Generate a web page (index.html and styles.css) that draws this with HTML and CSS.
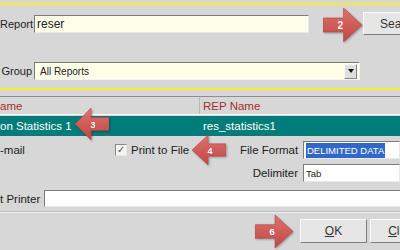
FILE: index.html
```html
<!DOCTYPE html>
<html lang="en">
<head>
  <meta charset="UTF-8" />
  <title>Report Search</title>
  <link rel="stylesheet" href="styles.css">
</head>
<body>
  <div class="dialog">
    <div class="rule"></div>

    <div class="criteria">
      <div class="row row-report">
        <span class="lbl">Report</span>
        <input type="text" class="field field-report" value="reser" />
        <button class="btn btn-search">Search</button>
      </div>
      <div class="row row-group">
        <span class="lbl">Group</span>
        <div class="select">
          <span class="select-text">All Reports</span>
          <span class="select-btn"><span class="caret"></span></span>
        </div>
      </div>
    </div>

    <div class="rule rule-low"></div>

    <div class="list">
      <div class="list-head">
        <div class="cell cell-name">ame</div>
        <div class="cell cell-rep">REP Name</div>
      </div>
      <div class="list-row selected">
        <div class="cell cell-name">on Statistics 1</div>
        <div class="cell cell-rep">res_statistics1</div>
      </div>
    </div>

    <div class="options">
      <span class="opt-lbl">-mail</span>
      <label class="check">
        <span class="box">&#10003;</span>
        <span>Print to File</span>
      </label>
      <span class="opt-lbl right">File Format</span>
      <div class="field field-small"><span class="sel-text">DELIMITED DATA</span></div>

      <span></span>
      <span></span>
      <span class="opt-lbl right">Delimiter</span>
      <div class="field field-small field-white">Tab</div>
    </div>

    <div class="printer">
      <span class="opt-lbl">t Printer</span>
      <div class="field field-white field-printer"></div>
    </div>

    <div class="separator"></div>

    <div class="footer">
      <button class="btn btn-ok"><u>O</u>K</button>
      <button class="btn btn-close"><u>C</u>lose</button>
    </div>

    <!-- callout arrows -->
    <svg class="arrow arrow-2" viewBox="0 0 38 34" preserveAspectRatio="none">
      <defs>
        <linearGradient id="red" x1="0" y1="0" x2="0" y2="1">
          <stop offset="0" stop-color="#e0716d"/>
          <stop offset="1" stop-color="#c04744"/>
        </linearGradient>
      </defs>
      <polygon points="0,10 20,10 20,0 38,17 20,34 20,24 0,24" fill="url(#red)" stroke="#b04a47" stroke-width="0.6"/>
      <text x="17" y="21" text-anchor="middle">2</text>
    </svg>
    <svg class="arrow arrow-3" viewBox="0 0 38 34" preserveAspectRatio="none">
      <polygon points="38,10 18,10 18,0 0,17 18,34 18,24 38,24" fill="url(#red)" stroke="#b04a47" stroke-width="0.6"/>
      <text x="20" y="21" text-anchor="middle">3</text>
    </svg>
    <svg class="arrow arrow-4" viewBox="0 0 38 34" preserveAspectRatio="none">
      <polygon points="38,10 18,10 18,0 0,17 18,34 18,24 38,24" fill="url(#red)" stroke="#b04a47" stroke-width="0.6"/>
      <text x="20" y="21" text-anchor="middle">4</text>
    </svg>
    <svg class="arrow arrow-6" viewBox="0 0 38 34" preserveAspectRatio="none">
      <polygon points="0,10 20,10 20,0 38,17 20,34 20,24 0,24" fill="url(#red)" stroke="#b04a47" stroke-width="0.6"/>
      <text x="17" y="21" text-anchor="middle">6</text>
    </svg>
  </div>
</body>
</html>
```

FILE: styles.css
```css
body {
  margin: 0;
  background: #d7d7d7;
  font-family: 'Liberation Sans', Arial, sans-serif;
  font-size: 11.5px;
  color: #222;
}

.dialog {
  position: relative;
  width: 400px;
  height: 250px;
  overflow: hidden;
}

.rule {
  height: 2px;
  margin-top: 3px;
  background: #f2ee2c;
}

.rule-low {
  margin-top: 8px;
}

.row {
  display: flex;
  align-items: center;
}

.row > * {
  flex: none;
}

.row-report {
  height: 23px;
  margin-top: 7px;
}

.row-group {
  height: 18px;
  margin-top: 27px;
}

.lbl {
  width: 32px;
  margin-right: 2px;
  font-size: 11px;
  text-align: right;
  white-space: nowrap;
}

.field {
  box-sizing: border-box;
  height: 18px;
  border: 1px solid;
  border-color: #7c7c7c #e9e9e9 #e9e9e9 #7c7c7c;
  background: #ffffe9;
  font-family: 'Liberation Sans', Arial, sans-serif;
}

.field-report {
  width: 275px;
  padding: 0 2px;
  font-size: 12px;
  color: #222;
}

.btn {
  box-sizing: border-box;
  border: 1px solid;
  border-color: #fafafa #7e7e7e #7e7e7e #fafafa;
  background: #e6e6e6;
  font-family: 'Liberation Sans', Arial, sans-serif;
  font-size: 12px;
  color: #333;
  padding: 0;
}

.btn-search {
  width: 72px;
  height: 23px;
  margin-left: 54px;
}

.select {
  box-sizing: border-box;
  width: 326px;
  height: 18px;
  display: flex;
  align-items: center;
  justify-content: space-between;
  border: 1px solid;
  border-color: #7c7c7c #f4f4f4 #f4f4f4 #7c7c7c;
  background: #ffffe9;
  padding-left: 5px;
}

.select-text {
  font-size: 10px;
}

.select-btn {
  box-sizing: border-box;
  width: 13px;
  height: 15px;
  margin-right: 2px;
  display: flex;
  align-items: center;
  justify-content: center;
  background: #dedede;
  border: 1px solid;
  border-color: #f8f8f8 #858585 #858585 #f8f8f8;
}

.caret {
  width: 0;
  height: 0;
  border-left: 3px solid transparent;
  border-right: 3px solid transparent;
  border-top: 4px solid #111;
}

.list {
  margin-top: 6px;
  border-top: 1px solid #8e8e8e;
}

.list-head,
.list-row {
  display: flex;
}

.list-head {
  height: 17px;
  border-bottom: 1px solid #fbfbfb;
  color: #a5302b;
}

.list-head .cell-name {
  border-right: 1px solid #b9b9b9;
}

.list-row {
  height: 20px;
  margin-top: 1px;
}

.selected {
  background: #017c7a;
  color: #fff;
}

.cell {
  display: flex;
  align-items: center;
  white-space: nowrap;
}

.cell-name {
  box-sizing: border-box;
  width: 200px;
}

.cell-rep {
  padding-left: 3px;
}

.options {
  display: grid;
  grid-template-columns: 115px 125px 58px 1fr;
  grid-template-rows: 18px 18px;
  row-gap: 5px;
  margin-top: 5px;
  align-items: center;
}

.opt-lbl {
  white-space: nowrap;
}

.right {
  text-align: right;
}

.check {
  display: flex;
  align-items: center;
  gap: 4px;
}

.box {
  box-sizing: border-box;
  width: 12px;
  height: 12px;
  display: flex;
  align-items: center;
  justify-content: center;
  background: #f4f4f0;
  border: 1px solid;
  border-color: #8a8a8a #e8e8e8 #e8e8e8 #8a8a8a;
  font-size: 10px;
  line-height: 1;
  color: #555;
}

.field-small {
  margin-left: 5px;
  display: flex;
  align-items: center;
  padding-left: 2px;
  font-size: 9.5px;
  background: #fff;
}

.field-white {
  background: #fff;
}

.sel-text {
  background: #3168c8;
  color: #fff;
  padding: 1px 1px;
  line-height: 13px;
}

.printer {
  display: flex;
  align-items: center;
  gap: 4px;
  margin-top: 8px;
}

.printer .opt-lbl {
  width: 40px;
}

.field-printer {
  flex: 1;
  height: 17px;
  margin-right: -4px;
}

.separator {
  height: 1px;
  margin-top: 4px;
  border-top: 1px solid #bcbcbc;
  background: #f1f1f1;
}

.footer {
  display: flex;
  gap: 3px;
  margin-top: 6px;
  padding-left: 300px;
}

.btn-ok,
.btn-close {
  flex: none;
  width: 67px;
  height: 24px;
}

.arrow {
  position: absolute;
  filter: drop-shadow(1px 1px 1px rgba(0, 0, 0, 0.3));
}

.arrow text {
  fill: #fff;
  font-family: 'Liberation Sans', Arial, sans-serif;
  font-weight: bold;
  font-size: 10px;
}

.arrow-2 {
  left: 323px;
  top: 8px;
  width: 39px;
  height: 34px;
}

.arrow-3 {
  left: 75px;
  top: 108px;
  width: 34px;
  height: 32px;
}

.arrow-4 {
  left: 192px;
  top: 135px;
  width: 34px;
  height: 30px;
}

.arrow-6 {
  left: 255px;
  top: 215px;
  width: 38px;
  height: 33px;
}
```
